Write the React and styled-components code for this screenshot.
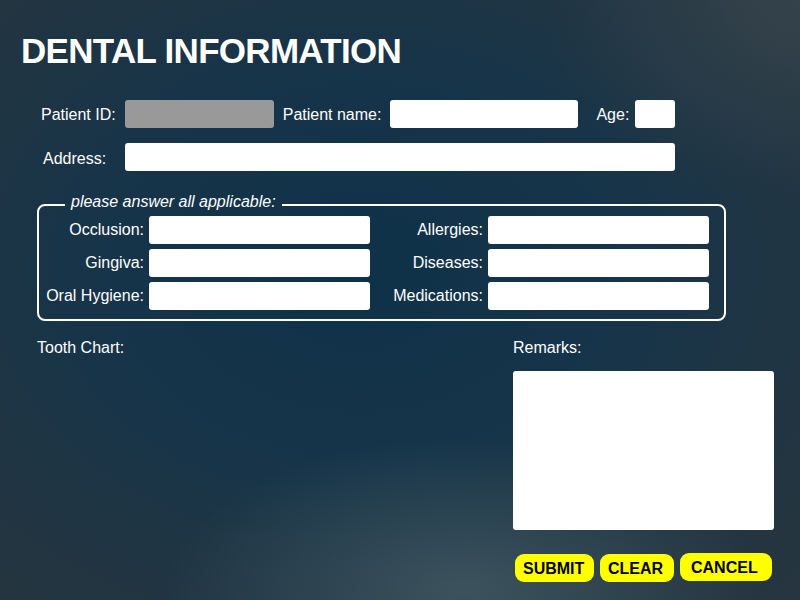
import React from "react";
import styled, { createGlobalStyle } from "styled-components";

const Global = createGlobalStyle`
  html, body { margin: 0; padding: 0; }
  body { width: 800px; height: 600px; overflow: hidden; font-family: "Liberation Sans", Arial, sans-serif; }
  * { box-sizing: border-box; }
`;

const Page = styled.div`
  width: 800px;
  height: 600px;
  padding: 33px 0 0 0;
  color: #fff;
  font-family: "Liberation Sans", Arial, sans-serif;
  background:
    radial-gradient(ellipse 300px 150px at 58% 98%, rgba(72, 96, 104, 0.7) 0%, rgba(72, 96, 104, 0) 100%),
    radial-gradient(ellipse 260px 200px at 100% 0%, rgba(60, 72, 80, 0.7) 0%, rgba(60, 72, 80, 0) 100%),
    radial-gradient(ellipse 600px 450px at 45% 45%, #0e3248 0%, #173449 45%, #233540 85%, #263540 100%);
`;

const Title = styled.h1`
  margin: 0 0 32px 21px;
  font-size: 35px;
  line-height: 35px;
  font-weight: 700;
  letter-spacing: -0.7px;
`;

const Row = styled.div`
  display: flex;
  align-items: center;
  height: 28px;
  padding-left: ${(p) => p.$left}px;
  margin-bottom: ${(p) => p.$after}px;
`;

const Label = styled.label`
  font-size: 16px;
  flex: none;
  width: ${(p) => (p.$w ? `${p.$w}px` : "auto")};
  margin-left: ${(p) => p.$ml || 0}px;
  margin-right: ${(p) => p.$mr ?? 9}px;
  padding-top: ${(p) => p.$pt || 0}px;
`;

const Field = styled.div`
  flex: none;
  width: ${(p) => p.$w}px;
  height: 28px;
  border-radius: 3px;
  background: ${(p) => (p.$disabled ? "#999999" : "#ffffff")};
  margin-right: ${(p) => p.$mr || 0}px;
`;

const Fieldset = styled.fieldset`
  margin: 0 0 0 37px;
  width: 689px;
  padding: 0 0 9px 0;
  border: 2px solid #fff;
  border-radius: 8px;
`;

const Legend = styled.legend`
  margin-left: 26px;
  padding: 0 6px 5px 6px;
  font-size: 16px;
  font-style: italic;
`;

const QGrid = styled.div`
  display: grid;
  grid-template-columns: 105px 221px 108px 221px;
  grid-auto-rows: 28px;
  column-gap: 5px;
  row-gap: 5px;
  align-items: center;
`;

const QLabel = styled.label`
  font-size: 16px;
  text-align: right;
  white-space: nowrap;
`;

const QField = styled.div`
  height: 28px;
  background: #fff;
  border-radius: 3px;
`;

const Bottom = styled.div`
  display: flex;
  margin-top: 18px;
  padding-left: 37px;
`;

const ChartCol = styled.div`
  width: 476px;
  font-size: 16px;
`;

const RemarksCol = styled.div`
  display: flex;
  flex-direction: column;
  width: 261px;
`;

const ColLabel = styled.div`
  font-size: 16px;
  margin-bottom: 14px;
`;

const Remarks = styled.div`
  width: 261px;
  height: 159px;
  background: #fff;
  border-radius: 3px;
`;

const Buttons = styled.div`
  display: flex;
  align-items: flex-start;
  gap: 6px;
  margin-top: 24px;
  padding-left: 2px;
`;

const Button = styled.button`
  width: ${(p) => p.$w}px;
  height: 28px;
  margin-top: ${(p) => p.$mt || 0}px;
  padding: 1px 0 0 ${(p) => p.$pl}px;
  text-align: left;
  border: none;
  border-radius: 9px;
  background: #ffff00;
  color: #000;
  font-family: "Liberation Sans", Arial, sans-serif;
  font-weight: 700;
  font-size: 16px;
`;

export default function App() {
  return (
    <Page>
      <Global />
      <Title>DENTAL INFORMATION</Title>
      <Row $left={41} $after={15}>
        <Label $pt={1}>Patient ID:</Label>
        <Field $w={149} $disabled $mr={9} />
        <Label $pt={1}>Patient name:</Label>
        <Field $w={188} $mr={18} />
        <Label $mr={6} $pt={1}>Age:</Label>
        <Field $w={40} />
      </Row>
      <Row $left={41} $after={22}>
        <Label $ml={2} $w={82} $mr={0} $pt={4}>Address:</Label>
        <Field $w={550} />
      </Row>
      <Fieldset>
        <Legend>please answer all applicable:</Legend>
        <QGrid>
          <QLabel>Occlusion:</QLabel>
          <QField />
          <QLabel>Allergies:</QLabel>
          <QField />
          <QLabel>Gingiva:</QLabel>
          <QField />
          <QLabel>Diseases:</QLabel>
          <QField />
          <QLabel>Oral Hygiene:</QLabel>
          <QField />
          <QLabel>Medications:</QLabel>
          <QField />
        </QGrid>
      </Fieldset>
      <Bottom>
        <ChartCol>Tooth Chart:</ChartCol>
        <RemarksCol>
          <ColLabel>Remarks:</ColLabel>
          <Remarks />
          <Buttons>
            <Button $w={79} $pl={8}>SUBMIT</Button>
            <Button $w={74} $pl={8}>CLEAR</Button>
            <Button $w={92} $pl={11} $mt={-1}>CANCEL</Button>
          </Buttons>
        </RemarksCol>
      </Bottom>
    </Page>
  );
}
